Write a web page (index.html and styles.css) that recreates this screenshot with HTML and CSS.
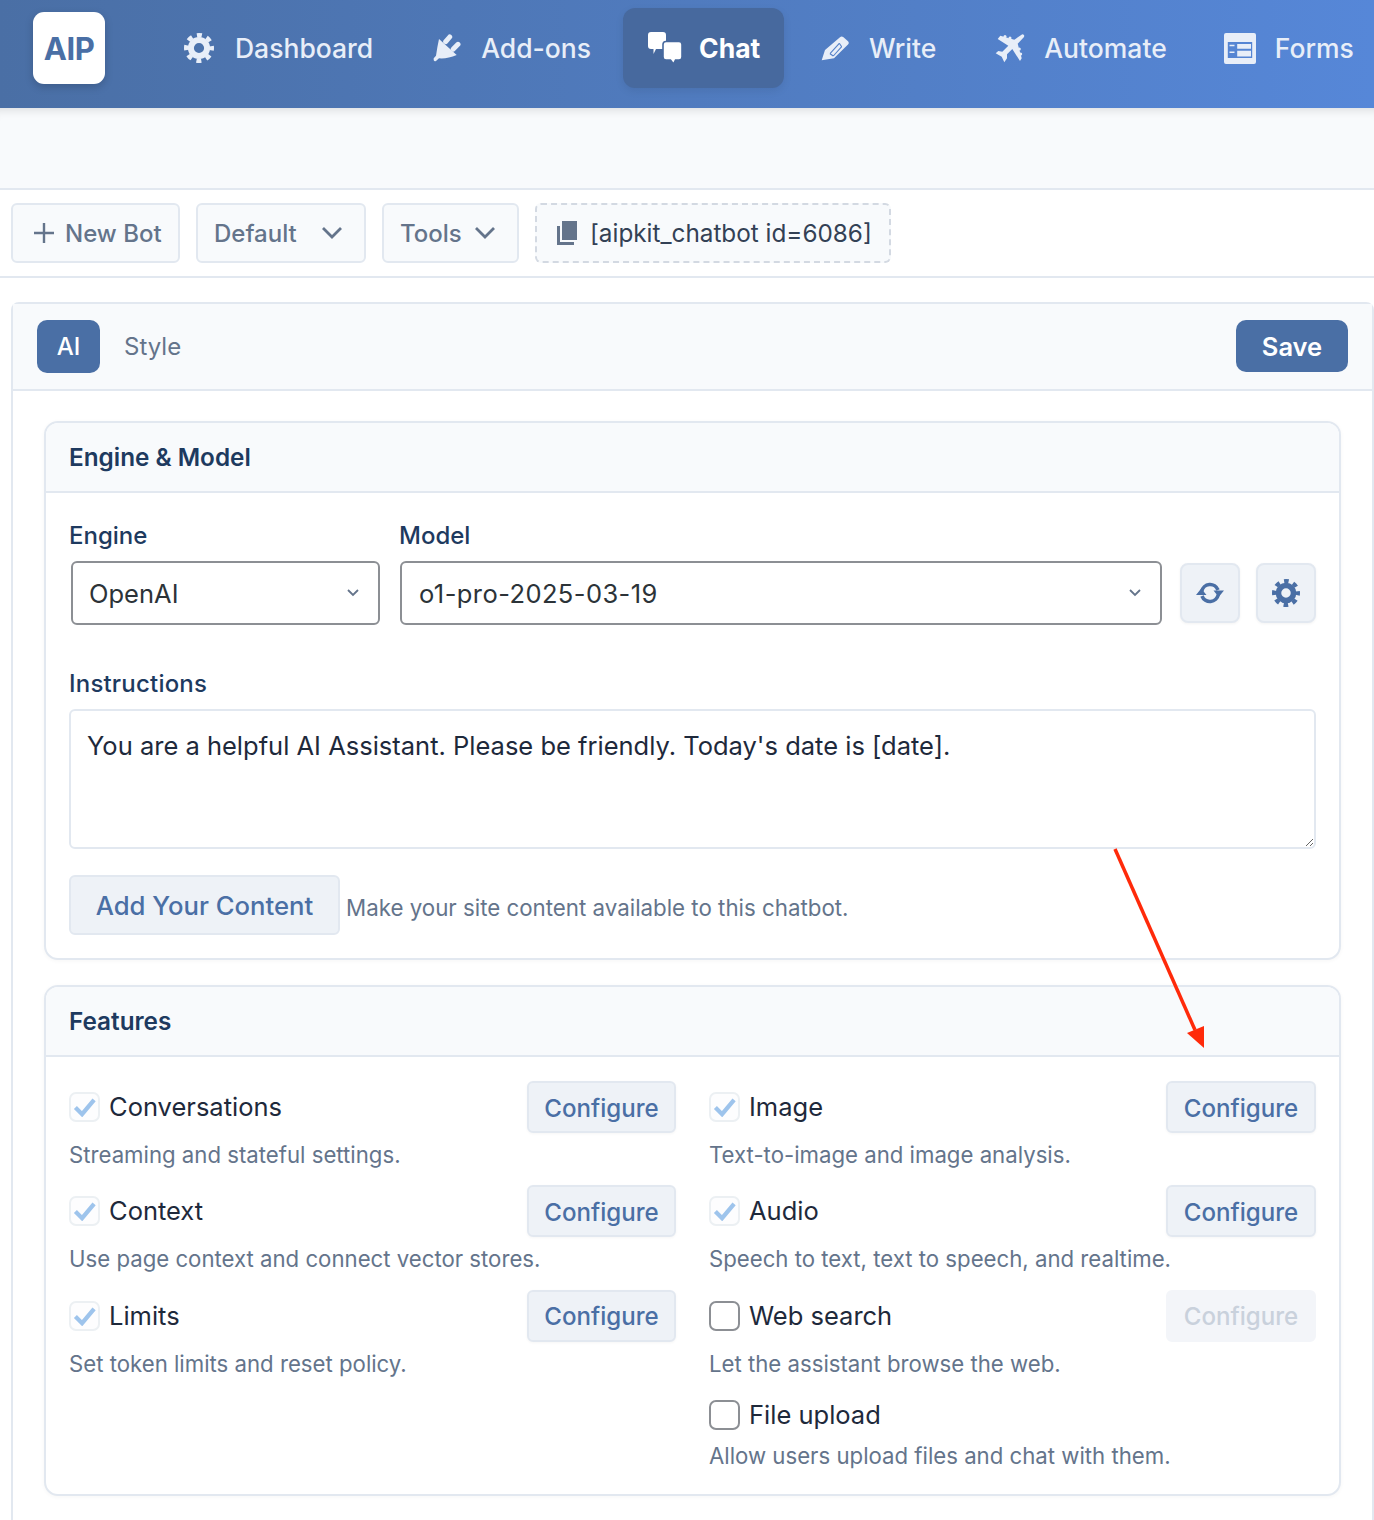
FILE: index.html
```html
<!DOCTYPE html>
<html lang="en">
<head>
<meta charset="utf-8">
<title>AIP Chat</title>
<link rel="stylesheet" href="styles.css">
</head>
<body>
<svg class="defs" width="0" height="0" aria-hidden="true">
  <symbol id="gear" viewBox="0 0 20 20">
    <circle cx="10" cy="10" r="5.400" fill="none" stroke="currentColor" stroke-width="4"/>
    <circle cx="10" cy="10" r="8.500" fill="none" stroke="currentColor" stroke-width="3" stroke-dasharray="3.300 3.376" stroke-dashoffset="1.65"/>
  </symbol>
</svg>

<header class="topbar">
  <div class="logo">AIP</div>
  <nav class="nav">
    <a class="nav-item nav-dash"><svg class="ico ico-gear"><use href="#gear"/></svg>Dashboard</a>
    <a class="nav-item nav-add"><svg class="ico ico-plug" viewBox="0 0 29 29"><path d="M13.700 7.700 17.700 3M21.300 15 26 10.300" fill="none" stroke="currentColor" stroke-width="5" stroke-linecap="round"/><path d="M7 5 24.700 21Q15.300 25 7 24.300L4 27Q1.300 28 1.700 24.300L4 21.700Q5.300 12.700 7 5z" fill="currentColor"/></svg>Add-ons</a>
    <a class="nav-item nav-active"><svg class="ico ico-chat" viewBox="0 0 34 32"><path d="M3 0h12a3 3 0 0 1 3 3v11a3 3 0 0 1-3 3H8l-2.500 5v-5H3a3 3 0 0 1-3-3V3a3 3 0 0 1 3-3z" fill="currentColor"/><path d="M18 9.500h13a3 3 0 0 1 3 3V25a3 3 0 0 1-3 3h-3.500l-2 4-3-4H18a3 3 0 0 1-3-3V12.500a3 3 0 0 1 3-3z" fill="currentColor" stroke="#47699e" stroke-width="1.600"/></svg>Chat</a>
    <a class="nav-item nav-write"><svg class="ico ico-pen" viewBox="0 0 28 25"><path d="M19 1.200Q20.500-.3 22.500 1.200L27 5.300Q28.500 7 27 8.500L13 22.300 .7 24.300 4 14z" fill="currentColor"/><path d="M9 17.700 18.300 7.300M12.300 20 20.700 10.700M9 17.700 12.300 20M18.300 7.300 20.700 10.700" stroke="#5480c8" stroke-width="1.100" fill="none"/></svg>Write</a>
    <a class="nav-item nav-auto"><svg class="ico ico-plane" viewBox="0 0 30 29"><path d="M27.300.3Q30 .5 29 3L22.700 9.700 26.700 24.300 25 27 17.300 15 12 20.300 12 24.300 9.300 28.300 6.700 22.700.7 19.300 3.300 17 7.300 17.700 13.300 11.700 2.700 5 5.300 1.700 19.300 5.700z" fill="currentColor"/><circle cx="10" cy="2.600" r="1.500" fill="currentColor"/><circle cx="15" cy="4" r="1.500" fill="currentColor"/><circle cx="24.300" cy="15" r="1.500" fill="currentColor"/><circle cx="25.700" cy="20" r="1.500" fill="currentColor"/></svg>Automate</a>
    <a class="nav-item nav-forms"><svg class="ico ico-forms" viewBox="0 0 32 31"><path fill-rule="evenodd" d="M2 0h28a2 2 0 0 1 2 2v27a2 2 0 0 1-2 2H2a2 2 0 0 1-2-2V2a2 2 0 0 1 2-2zM3.800 9v16h24.400V9z" fill="currentColor"/><path d="M13.200 11H27v4.700H13.200zM13.200 17.700H27v5.700H13.200zM5.500 11.700h5v1.600h-5zM5.500 18.400h5V20h-5z" fill="currentColor"/></svg>Forms</a>
  </nav>
</header>

<div class="subbar"></div>

<div class="toolbar">
  <button class="tool tool-new"><svg class="plus" viewBox="0 0 20 20"><path d="M10 0v20M0 10h20" stroke="currentColor" stroke-width="2.400" fill="none"/></svg>New Bot</button>
  <button class="tool tool-default">Default<svg class="chev" viewBox="0 0 22 14"><path d="M2 2l9 9 9-9" stroke="currentColor" stroke-width="2.800" fill="none"/></svg></button>
  <button class="tool tool-tools">Tools<svg class="chev" viewBox="0 0 22 14"><path d="M2 2l9 9 9-9" stroke="currentColor" stroke-width="2.800" fill="none"/></svg></button>
  <div class="shortcode"><svg class="copy" viewBox="0 0 20 24"><path d="M5 0h15v19H5z" fill="currentColor"/><path d="M0 5h3v16h14v3H0z" fill="currentColor"/></svg>[aipkit_chatbot id=6086]</div>
</div>

<main class="panel">
  <div class="panel-head">
    <div class="tabs">
      <span class="tab tab-on">AI</span>
      <span class="tab">Style</span>
    </div>
    <button class="save">Save</button>
  </div>

  <div class="panel-body">
    <section class="card card-engine">
      <h2 class="card-head">Engine &amp; Model</h2>
      <div class="card-body">
        <div class="model-row">
          <div class="field field-engine">
            <label class="label">Engine</label>
            <div class="select">OpenAI<svg class="sel-chev" viewBox="0 0 12 8"><path d="M1 1l5 5 5-5" stroke="currentColor" stroke-width="1.800" fill="none"/></svg></div>
          </div>
          <div class="field field-model">
            <label class="label">Model</label>
            <div class="select">o1-pro-2025-03-19<svg class="sel-chev" viewBox="0 0 12 8"><path d="M1 1l5 5 5-5" stroke="currentColor" stroke-width="1.800" fill="none"/></svg></div>
          </div>
          <button class="icon-btn"><svg class="ico-sync" viewBox="0 0 28 22"><path d="M5.700 9.500A8.500 8.500 0 0 1 22 8" fill="none" stroke="currentColor" stroke-width="3.600"/><path d="M22.300 12.500A8.500 8.500 0 0 1 6 14" fill="none" stroke="currentColor" stroke-width="3.600"/><path d="M17.500 8.500H28L22.700 15zM0 13H10.500L5.200 6.500z" fill="currentColor"/></svg></button>
          <button class="icon-btn"><svg class="ico-gear2"><use href="#gear"/></svg></button>
        </div>

        <label class="label label-instr">Instructions</label>
        <textarea class="instructions" readonly>You are a helpful AI Assistant. Please be friendly. Today's date is [date].</textarea>

        <div class="content-row">
          <button class="add-content">Add Your Content</button>
          <span class="hint">Make your site content available to this chatbot.</span>
        </div>
      </div>
    </section>

    <section class="card card-features">
      <h2 class="card-head">Features</h2>
      <div class="features">
        <div class="feature">
          <div class="feature-top"><span class="check on"><svg viewBox="0 0 24 20"><path d="M2.500 10.500l7 7L22 2.500" fill="none" stroke="currentColor" stroke-width="4.400"/></svg></span><span class="feature-name">Conversations</span><button class="configure">Configure</button></div>
          <p class="feature-desc">Streaming and stateful settings.</p>
        </div>
        <div class="feature">
          <div class="feature-top"><span class="check on"><svg viewBox="0 0 24 20"><path d="M2.500 10.500l7 7L22 2.500" fill="none" stroke="currentColor" stroke-width="4.400"/></svg></span><span class="feature-name">Image</span><button class="configure">Configure</button></div>
          <p class="feature-desc">Text-to-image and image analysis.</p>
        </div>
        <div class="feature">
          <div class="feature-top"><span class="check on"><svg viewBox="0 0 24 20"><path d="M2.500 10.500l7 7L22 2.500" fill="none" stroke="currentColor" stroke-width="4.400"/></svg></span><span class="feature-name">Context</span><button class="configure">Configure</button></div>
          <p class="feature-desc">Use page context and connect vector stores.</p>
        </div>
        <div class="feature">
          <div class="feature-top"><span class="check on"><svg viewBox="0 0 24 20"><path d="M2.500 10.500l7 7L22 2.500" fill="none" stroke="currentColor" stroke-width="4.400"/></svg></span><span class="feature-name">Audio</span><button class="configure">Configure</button></div>
          <p class="feature-desc">Speech to text, text to speech, and realtime.</p>
        </div>
        <div class="feature">
          <div class="feature-top"><span class="check on"><svg viewBox="0 0 24 20"><path d="M2.500 10.500l7 7L22 2.500" fill="none" stroke="currentColor" stroke-width="4.400"/></svg></span><span class="feature-name">Limits</span><button class="configure">Configure</button></div>
          <p class="feature-desc">Set token limits and reset policy.</p>
        </div>
        <div class="feature">
          <div class="feature-top"><span class="check"></span><span class="feature-name">Web search</span><button class="configure off">Configure</button></div>
          <p class="feature-desc">Let the assistant browse the web.</p>
        </div>
        <div class="feature feature-empty"></div>
        <div class="feature feature-last">
          <div class="feature-top feature-top-plain"><span class="check"></span><span class="feature-name">File upload</span></div>
          <p class="feature-desc">Allow users upload files and chat with them.</p>
        </div>
      </div>
    </section>
  </div>
</main>

<svg class="annot" viewBox="0 0 1374 1520" aria-hidden="true">
  <path d="M1115 849 1195 1030" stroke="#ff2a0a" stroke-width="3.500" fill="none"/>
  <path d="M1204 1048 1187 1033 1204 1026z" fill="#ff2a0a"/>
</svg>
</body>
</html>
```

FILE: styles.css
```css
* { box-sizing: border-box; }
html, body { margin: 0; padding: 0; height: 1520px; overflow: hidden; background: #fff; }
body { position: relative; font-family: Inter, "Liberation Sans", sans-serif; color: #1e293b; }
button { font-family: inherit; cursor: pointer; }
.defs { position: absolute; }

.topbar { height: 108px; display: flex; padding-left: 33px; background: linear-gradient(90deg, #4a6fa5 0%, #5687d8 100%); position: relative; z-index: 2; color: #e8eef8; }
.logo { width: 72px; height: 72px; margin-top: 12px; background: #fff; border-radius: 11px; color: #4a6fa5; font-size: 31px; font-weight: 700; display: flex; align-items: center; justify-content: center; box-shadow: 0 3px 8px rgba(0,0,0,.18); letter-spacing: -.5px; }
.nav { display: flex; margin-left: 79px; align-items: flex-start; padding-top: 8px; white-space: nowrap; }
.nav-item { display: flex; align-items: center; height: 80px; font-size: 26.500px; font-weight: 500; }
.ico { fill: currentColor; display: block; flex: none; }
.ico-gear { width: 30px; height: 30px; margin-right: 21px; }
.ico-plug { width: 29px; height: 29px; margin-right: 20px; }
.ico-chat { width: 34px; height: 32px; margin-right: 17px; }
.ico-pen { width: 28px; height: 25px; margin-right: 20px; }
.ico-plane { width: 30px; height: 29px; margin-right: 19px; }
.ico-forms { width: 32px; height: 31px; margin-right: 19px; }
.nav-add { margin-left: 59px; }
.nav-active { margin-left: 32px; width: 161px; padding-left: 25px; background: #47699e; border-radius: 12px; color: #fff; font-weight: 700; box-shadow: 0 3px 8px rgba(0,0,0,.08); }
.nav-write { margin-left: 37px; }
.nav-auto { margin-left: 59px; }
.nav-forms { margin-left: 57px; }

.subbar { height: 82px; background: #f8fafc; border-bottom: 2px solid #e2e8f0; box-shadow: inset 0 10px 10px -8px rgba(0,0,0,.12); }

.toolbar { height: 88px; border-bottom: 2px solid #e2e8f0; padding: 13px 0 0 11px; display: flex; gap: 16px; align-items: flex-start; }
.tool { height: 60px; background: #f8fafc; border: 2px solid #e2e8f0; border-radius: 6px; color: #64748b; font-size: 24px; font-weight: 500; display: flex; align-items: center; padding: 0; }
.tool-new { width: 169px; padding-left: 21px; }
.plus { width: 20px; height: 20px; margin-right: 11px; }
.tool-default { width: 170px; padding-left: 16px; }
.tool-default .chev { margin-left: 24px; }
.tool-tools { width: 137px; padding-left: 16px; }
.tool-tools .chev { margin-left: 12px; }
.chev { width: 22px; height: 14px; }
.shortcode { height: 60px; width: 356px; border: 2px dashed #d3d9e2; border-radius: 6px; background: #f8fafc; display: flex; align-items: center; padding-left: 20px; font-size: 24.300px; color: #334155; white-space: nowrap; }
.copy { width: 20px; height: 24px; margin-right: 13px; color: #64748b; flex: none; }

.panel { margin: 24px 0 0 11px; border: 2px solid #e2e8f0; border-radius: 8px 8px 0 0; border-bottom: 0; }
.panel-head { height: 87px; background: #f8fafc; border-bottom: 2px solid #e2e8f0; display: flex; justify-content: space-between; padding: 16px 24px 0 24px; align-items: flex-start; }
.tabs { display: flex; }
.tab { height: 53px; display: flex; align-items: center; padding: 0 24px 0 24px; font-size: 24px; color: #64748b; }
.tab-on { width: 63px; padding: 0; justify-content: center; background: #4a6fa5; color: #fff; border-radius: 10px; font-weight: 500; }
.save { width: 112px; height: 52px; border: 0; border-radius: 10px; background: #4a6fa5; color: #fff; font-size: 25.500px; font-weight: 600; }

.panel-body { padding: 30px 31px 60px; display: flex; flex-direction: column; gap: 25px; }
.card { border: 2px solid #e2e8f0; border-radius: 14px; background: #fff; box-shadow: 0 1px 4px rgba(0,0,0,.04); overflow: hidden; }
.card-engine { height: 539px; }
.card-features { height: 511px; }
.card-head { margin: 0; height: 70px; background: #f8fafc; border-bottom: 2px solid #e2e8f0; padding: 0 0 0 23px; display: flex; align-items: center; font-size: 24.300px; font-weight: 600; color: #1e3a5f; }
.card-body { padding: 28px 23px 0; }

.model-row { display: flex; align-items: flex-end; }
.field-engine { width: 312px; margin-right: 18px; }
.field-model { width: 763px; margin-right: 18px; }
.field-model .select { letter-spacing: .42px; }
.label { display: block; font-size: 24px; font-weight: 500; color: #1e3a5f; line-height: 30px; }
.select { margin: 10px 0 0 1px; height: 64px; border: 2px solid #8c8f94; border-radius: 6px; display: flex; align-items: center; justify-content: space-between; padding: 0 19px 0 17px; font-size: 25.500px; color: #2c3338; }
.field-engine .select { width: 309px; margin-left: 2px; padding-left: 16px; }
.sel-chev { width: 12px; height: 8px; color: #64748b; }
.icon-btn { width: 60px; height: 60px; margin-bottom: 2px; border: 2px solid #e2e8f0; border-radius: 8px; background: #eef2f7; color: #4a6fa5; display: flex; align-items: center; justify-content: center; padding: 0; box-shadow: 0 1px 3px rgba(0,0,0,.05); }
.icon-btn + .icon-btn { margin-left: 16px; }
.ico-sync { width: 28px; height: 22px; }
.ico-gear2 { width: 28px; height: 28px; }

.label-instr { margin-top: 44px; letter-spacing: .2px; }
.instructions { display: block; width: 100%; height: 140px; margin-top: 10px; border: 2px solid #e2e8f0; border-radius: 6px; padding: 17px 16px; font: 25.500px/1.4 Inter, "Liberation Sans", sans-serif; color: #1e293b; outline: 0; }

.content-row { display: flex; align-items: center; margin-top: 26px; }
.add-content { width: 271px; height: 60px; border: 2px solid #e2e8f0; border-radius: 6px; background: #eef2f7; color: #4a6fa5; font-size: 25.700px; font-weight: 500; padding: 0; }
.hint { margin: 4px 0 0 6px; font-size: 22.300px; color: #64748b; }

.features { display: grid; grid-template-columns: 607px 607px; column-gap: 33px; padding: 24px 23px 0; grid-auto-rows: 104.300px; }
.feature-top { display: flex; align-items: center; height: 52px; }
.check { width: 31px; height: 30px; border: 2px solid #8c8f94; border-radius: 7px; background: #fff; margin-right: 9px; flex: none; display: flex; align-items: center; justify-content: center; }
.check.on { border-color: #ecf0f3; color: #9ec4ec; background: #fdfdfe; }
.check svg { width: 23px; height: 20px; }
.feature-name { font-size: 25.500px; color: #1e293b; flex: 1; padding-bottom: 1px; }
.configure { width: 150px; height: 52px; border: 2px solid #e2e8f0; border-radius: 6px; background: #eef2f7; color: #4a6fa5; font-size: 24.100px; font-weight: 500; padding: 2px 0 0; box-shadow: 0 1px 3px rgba(0,0,0,.04); }
.feature:nth-child(odd) .configure { width: 149px; }
.configure.off { background: #f3f5f9; border-color: #f3f5f9; color: #c9d1dc; box-shadow: none; }
.feature-desc { margin: 7px 0 0; font-size: 22.200px; line-height: 30px; color: #64748b; }
.feature-last { margin-top: -4px; }
.feature-top-plain { height: 50px; }
.feature-top-plain + .feature-desc { margin-top: 1px; }

.annot { position: absolute; left: 0; top: 0; width: 1374px; height: 1520px; pointer-events: none; z-index: 3; }
```
